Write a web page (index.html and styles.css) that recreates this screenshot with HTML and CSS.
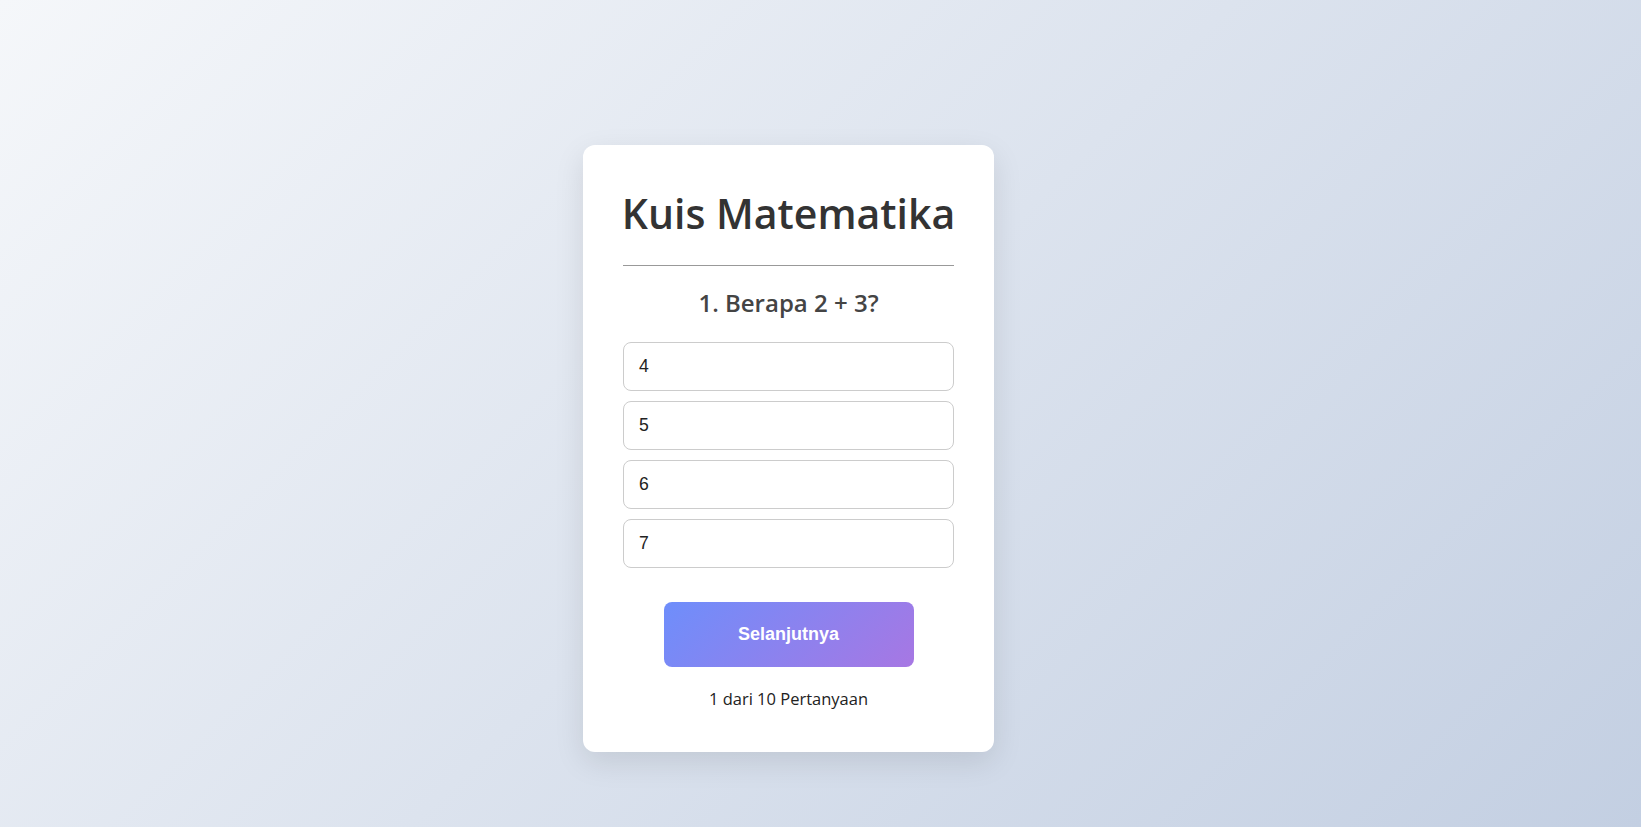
FILE: index.html
```html
<!DOCTYPE html>
<html lang="id">
<head>
<meta charset="utf-8">
<title>Kuis Matematika</title>
<link rel="stylesheet" href="styles.css">
</head>
<body>
  <main class="quiz-card">
    <h1 class="quiz-title">Kuis Matematika</h1>
    <hr class="quiz-divider">
    <h2 class="quiz-question">1. Berapa 2 + 3?</h2>
    <div class="quiz-options">
      <button class="quiz-option">4</button>
      <button class="quiz-option">5</button>
      <button class="quiz-option">6</button>
      <button class="quiz-option">7</button>
    </div>
    <button class="quiz-next">Selanjutnya</button>
    <p class="quiz-progress">1 dari 10 Pertanyaan</p>
  </main>
</body>
</html>
```

FILE: styles.css
```css
* {
  box-sizing: border-box;
}

html, body {
  margin: 0;
  height: 100%;
}

body {
  font-family: "Open Sans", "Noto Sans", sans-serif;
  background: linear-gradient(135deg, #f5f7fa 0%, #c3cfe2 100%);
  display: flex;
  justify-content: center;
  align-items: flex-start;
  padding: 145px 64px 0 0;
}

.quiz-card {
  width: 411px;
  background: #ffffff;
  border-radius: 12px;
  box-shadow: 0 10px 30px rgba(0, 0, 0, 0.1);
  padding: 44px 40px 41px;
  display: flex;
  flex-direction: column;
  align-items: center;
}

.quiz-title {
  margin: 0;
  font-size: 41px;
  line-height: 48px;
  font-weight: 600;
  color: #333333;
  letter-spacing: 0;
  text-align: center;
  white-space: nowrap;
}

.quiz-divider {
  width: 100%;
  margin: 28px 0 0;
  border: 0;
  border-top: 1px solid #999999;
  height: 0;
}

.quiz-question {
  margin: 22px 0 0;
  font-size: 24px;
  line-height: 29px;
  font-weight: 600;
  color: #444444;
  text-align: center;
}

.quiz-options {
  width: 100%;
  margin-top: 25px;
  display: flex;
  flex-direction: column;
  gap: 10px;
}

.quiz-option {
  width: 100%;
  height: 49px;
  padding: 0 15px;
  border: 1px solid #cccccc;
  border-radius: 8px;
  background: #ffffff;
  font-family: "Liberation Sans", Arial, sans-serif;
  font-size: 17.6px;
  color: #222222;
  text-align: left;
}

.quiz-next {
  margin-top: 34px;
  width: 250px;
  height: 65px;
  border: 0;
  border-radius: 8px;
  background: linear-gradient(135deg, #6e8efb 0%, #a777e3 100%);
  color: #ffffff;
  font-family: "Liberation Sans", Arial, sans-serif;
  font-size: 18px;
  font-weight: 700;
}

.quiz-progress {
  margin: 20px 0 0;
  font-size: 16.5px;
  line-height: 24px;
  color: #222222;
  text-align: center;
}
```
